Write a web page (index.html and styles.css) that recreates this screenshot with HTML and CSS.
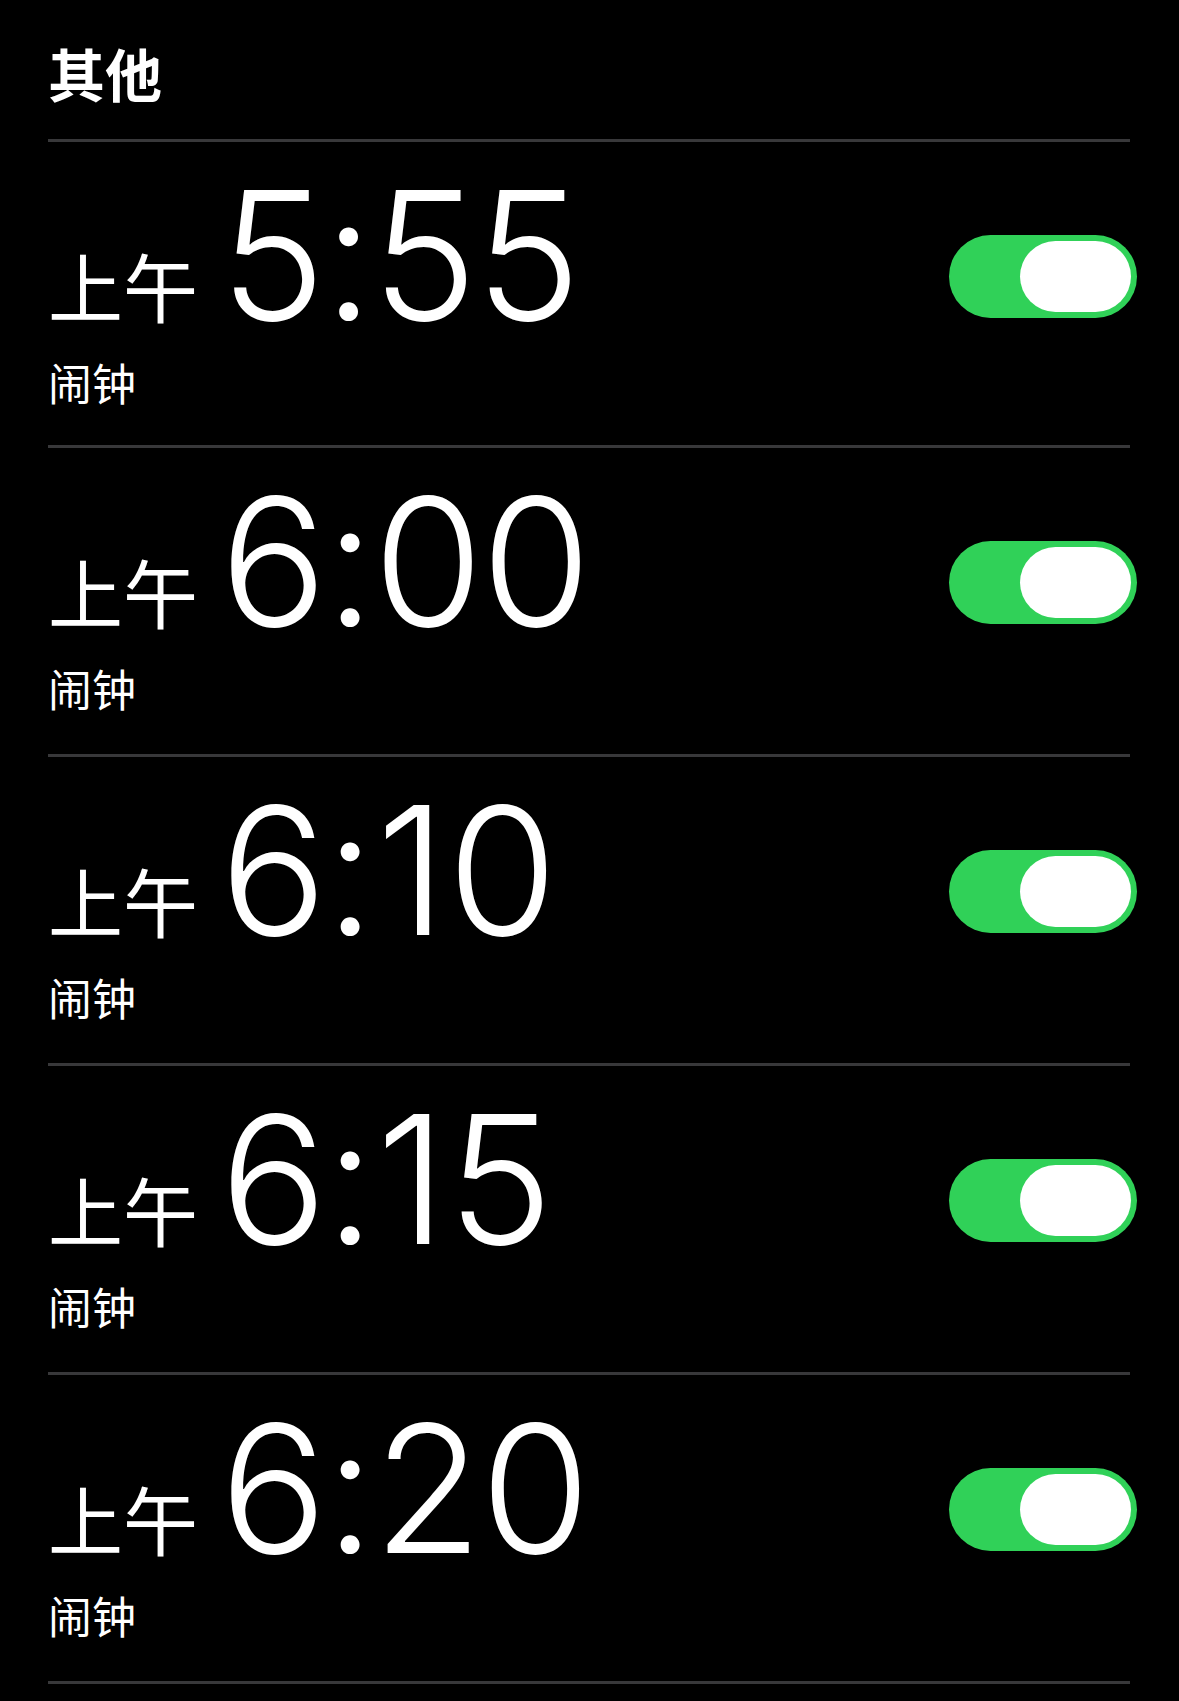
FILE: index.html
```html
<!DOCTYPE html>
<html lang="zh-CN">
<head>
  <meta charset="UTF-8" />
  <meta name="viewport" content="width=device-width, initial-scale=1.0"/>
  <title>闹钟</title>
  <link rel="stylesheet" href="styles.css">
</head>
<body>
  <section class="alarms">
    <h2 class="section-title">其他</h2>

    <div class="alarm">
      <div class="alarm-info">
        <div class="alarm-time"><span class="ampm">上午</span><span class="clock">5:55</span></div>
        <div class="alarm-label">闹钟</div>
      </div>
      <div class="switch on"><span class="knob"></span></div>
    </div>

    <div class="alarm">
      <div class="alarm-info">
        <div class="alarm-time"><span class="ampm">上午</span><span class="clock">6:00</span></div>
        <div class="alarm-label">闹钟</div>
      </div>
      <div class="switch on"><span class="knob"></span></div>
    </div>

    <div class="alarm">
      <div class="alarm-info">
        <div class="alarm-time"><span class="ampm">上午</span><span class="clock">6:<span class="one">1</span>0</span></div>
        <div class="alarm-label">闹钟</div>
      </div>
      <div class="switch on"><span class="knob"></span></div>
    </div>

    <div class="alarm">
      <div class="alarm-info">
        <div class="alarm-time"><span class="ampm">上午</span><span class="clock">6:<span class="one">1</span>5</span></div>
        <div class="alarm-label">闹钟</div>
      </div>
      <div class="switch on"><span class="knob"></span></div>
    </div>

    <div class="alarm">
      <div class="alarm-info">
        <div class="alarm-time"><span class="ampm">上午</span><span class="clock">6:20</span></div>
        <div class="alarm-label">闹钟</div>
      </div>
      <div class="switch on"><span class="knob"></span></div>
    </div>
  </section>
</body>
</html>
```

FILE: styles.css
```css
* {
  margin: 0;
  padding: 0;
  box-sizing: border-box;
}
body {
  background-color: #000;
  color: #fff;
  font-family: Inter, "Noto Sans CJK SC", sans-serif;
}
.alarms {
  padding: 0 49px 0 48px;
}
.section-title {
  font-family: "Noto Sans CJK SC", sans-serif;
  font-size: 57px;
  font-weight: 700;
  line-height: 1;
  padding-top: 44px;
  border-bottom: 3px solid #38383a;
  box-sizing: content-box;
  height: 95px;
}
.alarm {
  display: flex;
  justify-content: space-between;
  align-items: flex-start;
  height: 309px;
  border-bottom: 3px solid #38383a;
}
.alarm:first-of-type {
  height: 306px;
}
.alarm-time {
  margin-top: 25px;
  white-space: nowrap;
  line-height: 1;
}
.ampm {
  display: inline-block;
  font-family: "Noto Sans CJK SC", sans-serif;
  font-size: 75px;
  line-height: 1;
  margin-right: 22px;
  vertical-align: 3px;
}
.clock {
  display: inline-block;
  font-size: 178px;
  font-weight: 260;
  line-height: 1;
  letter-spacing: -2px;
}
/* the digit one is a bit wider-set on the clock face */
.one {
  margin: 0 3px;
}
.alarm-label {
  font-family: "Noto Sans CJK SC", sans-serif;
  font-size: 44px;
  line-height: 1;
  margin-top: 15px;
}
.switch {
  width: 188px;
  height: 83px;
  border-radius: 42px;
  margin-top: 93px;
  margin-right: -7px;
  padding: 6px 6px 6px 0;
  display: flex;
  justify-content: flex-end;
  background-color: #30d158;
}
.knob {
  width: 111px;
  height: 71px;
  border-radius: 36px;
  background-color: #fff;
}
```
